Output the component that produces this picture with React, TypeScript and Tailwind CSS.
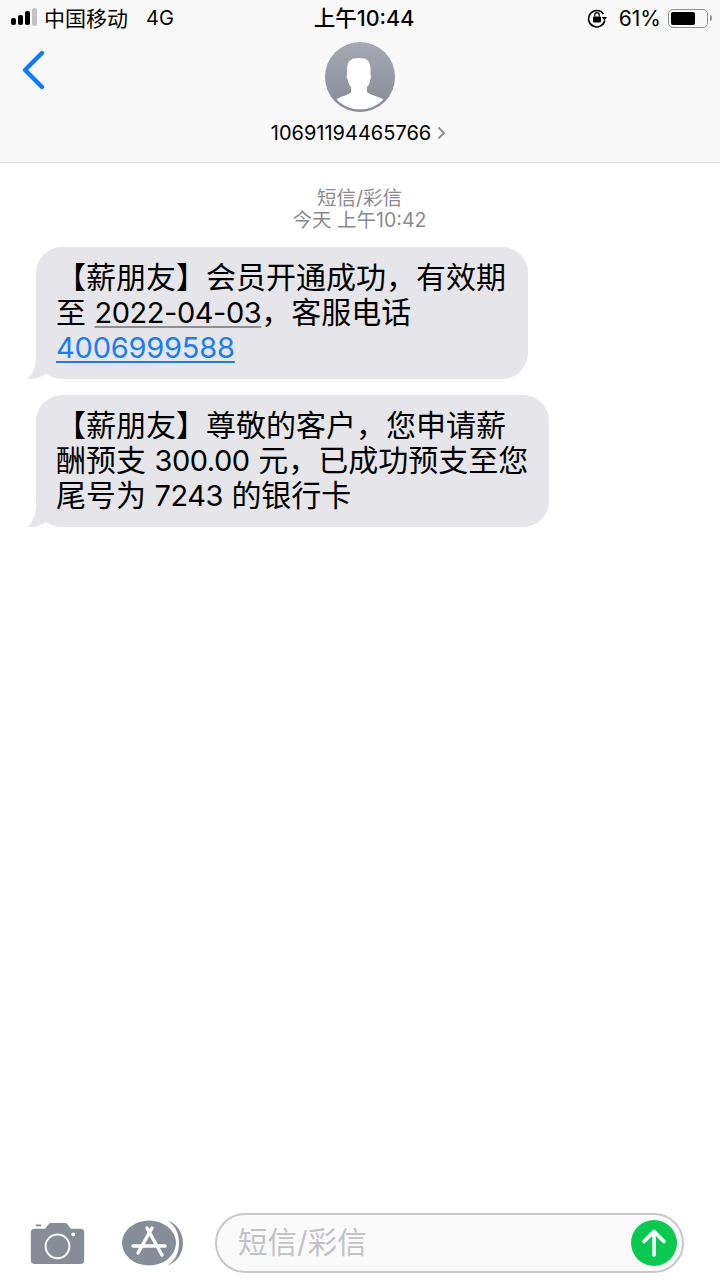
import React from 'react';

const num = 'text-[29px] tracking-[-0.45px]';

const BubbleTail = () => (
  <svg className="absolute left-[-10px] bottom-0" width="34" height="24" viewBox="0 0 34 24">
    <path d="M10 2 C10 11 7 19 2 23 C1 23.8 1.5 24 3 24 C10 24 16 22 21 18 L21 2 Z" fill="#e5e5ea" />
  </svg>
);

const Avatar = () => (
  <svg width="70" height="70" viewBox="0 0 70 70">
    <defs>
      <linearGradient id="av" x1="0" y1="0" x2="0" y2="1">
        <stop offset="0" stopColor="#a5a9b3" />
        <stop offset="1" stopColor="#858a95" />
      </linearGradient>
      <clipPath id="avc">
        <circle cx="35" cy="34.5" r="33" />
      </clipPath>
    </defs>
    <circle cx="35" cy="35" r="35" fill="url(#av)" />
    <path
      clipPath="url(#avc)"
      d="M34 16 C26 16 22 19 22 27 L22 33 C21 34 22 37 23 38 C23 41 25 44 26 45 L26 50 C24 53 17 54 12 57 L8 70 L62 70 L58 57 C52 54 45 53 42 50 L42 45 C44 43 45 41 45 38 C46.5 36 46.5 34 45.5 33 L45.5 27 C45.5 19 42 16 34 16 Z"
      fill="#ffffff"
    />
  </svg>
);

const Camera = () => (
  <svg width="55" height="41" viewBox="0 0 56 43">
    <path
      fillRule="evenodd"
      fill="#858d98"
      d="M4 6 H15 L18 2 Q19 0 21 0 H36 Q38 0 39 2 L42 6 H52 Q56 6 56 10 V39 Q56 43 52 43 H4 Q0 43 0 39 V10 Q0 6 4 6 Z M28 11 A13.5 13.5 0 1 0 28 38 A13.5 13.5 0 1 0 28 11 Z M28 13 A11.5 11.5 0 1 1 28 36 A11.5 11.5 0 1 1 28 13 Z"
    />
    <rect x="5" y="1.5" width="6" height="2" rx="1" fill="#858d98" />
    <circle cx="44.5" cy="12" r="2" fill="#ffffff" />
  </svg>
);

const AppStore = () => (
  <svg width="62" height="46" viewBox="0 0 62 46">
    <path d="M46 1 C54 6 57 14 57 23 C57 32 54 40 46 45 C54 43 61 34 61 23 C61 12 54 3 46 1 Z" fill="#858d98" />
    <ellipse cx="27" cy="23" rx="27" ry="22.5" fill="#858d98" />
    <g stroke="#ffffff" strokeWidth="3.4" strokeLinecap="round" fill="none">
      <path d="M30 8 L16 33" />
      <path d="M25 8 L40 35" />
      <path d="M11 26 H43" />
    </g>
  </svg>
);

const RotationLock = () => (
  <svg width="20" height="20" viewBox="0 0 20 20">
    <path d="M16.5 6 A8.2 8.2 0 1 0 17.8 12.5" fill="none" stroke="#000" strokeWidth="1.6" />
    <path d="M14.8 9 L20 9 L17.4 12.6 Z" fill="#000" />
    <rect x="6" y="8.5" width="8" height="6" rx="1" fill="#000" />
    <path d="M7.8 8.5 V6.8 A2.2 2.2 0 0 1 12.2 6.8 V8.5" fill="none" stroke="#000" strokeWidth="1.2" />
  </svg>
);

const Battery = () => (
  <div className="flex items-center">
    <div className="w-[40px] h-[19px] rounded-[5px] border border-[#8e8e8e] p-[2px]">
      <div className="w-[24px] h-full rounded-[2px] bg-black" />
    </div>
    <div className="w-[2px] h-[6px] ml-[2px] rounded-r-sm bg-[#9a9a9a]" />
  </div>
);

const App: React.FC = () => {
  return (
    <div
      className="flex flex-col h-[1280px] w-[720px] overflow-hidden bg-white text-black"
      style={{ fontFamily: 'Inter, "Noto Sans CJK SC", sans-serif' }}
    >
      {/* Header */}
      <div className="relative h-[163px] shrink-0 bg-[#f9f9f9] border-b border-[#dcdcdc]">
        <div className="flex items-center justify-between h-[36px] pl-[11px] pr-[8px]">
          <div className="flex items-center w-[240px]">
            <div className="flex items-center gap-[2px]">
              <div className="w-[5px] h-[7px] rounded-[2px] bg-black mt-[6px]" />
              <div className="w-[5px] h-[10px] rounded-[2px] bg-black mt-[3px]" />
              <div className="w-[5px] h-[14px] rounded-[2px] bg-black mt-[-1px]" />
              <div className="w-[5px] h-[18px] rounded-[2px] bg-[#c4c4c4] mt-[-2px]" />
            </div>
            <span className="ml-[7px] text-[21px] leading-none">中国移动</span>
            <span className="ml-[18px] text-[20px] leading-none">4G</span>
          </div>
          <span className="ml-[5px] pt-[2px] text-[21.5px] leading-none font-medium">上午10:44</span>
          <div className="flex items-center justify-end w-[240px]">
            <RotationLock />
            <span className="ml-[12px] text-[21px] leading-none">61%</span>
            <div className="ml-[7px]">
              <Battery />
            </div>
          </div>
        </div>
        <svg className="absolute left-[21px] top-[50px]" width="24" height="40" viewBox="0 0 24 40">
          <path d="M21 3 L4 20 L21 37" fill="none" stroke="#0a7aff" strokeWidth="4.4" strokeLinecap="round" strokeLinejoin="round" />
        </svg>
        <div className="flex flex-col items-center mt-[6px]">
          <Avatar />
          <div className="flex items-center mt-[9px] mr-[3px] h-[24px]">
            <span className="text-[20px] leading-none">10691194465766</span>
            <svg className="ml-[6px]" width="9" height="14" viewBox="0 0 9 14">
              <path d="M1.5 1.5 L7 7 L1.5 12.5" fill="none" stroke="#8f8f94" strokeWidth="2" />
            </svg>
          </div>
        </div>
      </div>

      {/* Messages */}
      <div className="flex-1 px-[36px] pt-[22px]">
        <div className="pt-[2px] text-center text-[19.5px] leading-[22px] text-[#8a8a8e] ml-[-1px]">
          <div>短信/彩信</div>
          <div>今天 上午10:42</div>
        </div>
        <div className="relative mt-[16px] w-[492px] h-[132px] rounded-[26px] bg-[#e5e5ea] pl-[20px] pt-[13px] text-[30px] leading-[35px]">
          <BubbleTail />
          <div className="relative whitespace-nowrap">【薪朋友】会员开通成功，有效期</div>
          <div className="relative whitespace-nowrap">
            至 <span className={`${num} underline decoration-[#8e8e93] decoration-[1.5px] underline-offset-[3px]`}>2022-04-03</span>，客服电话
          </div>
          <div className="relative whitespace-nowrap text-[29px] tracking-[-0.2px] text-[#1a7fec] underline decoration-[1.5px] underline-offset-[3px]">4006999588</div>
        </div>
        <div className="relative mt-[16px] w-[513px] h-[132px] rounded-[26px] bg-[#e5e5ea] pl-[20px] pt-[13px] text-[30px] leading-[35px]">
          <BubbleTail />
          <div className="relative whitespace-nowrap">【薪朋友】尊敬的客户，您申请薪</div>
          <div className="relative whitespace-nowrap">
            酬预支 <span className={num}>300.00</span> 元，已成功预支至您
          </div>
          <div className="relative whitespace-nowrap">
            尾号为 <span className={num}>7243</span> 的银行卡
          </div>
        </div>
      </div>

      {/* Input bar */}
      <div className="flex items-center h-[60px] shrink-0 mb-[7px] pl-[30px] pr-[36px]">
        <Camera />
        <div className="ml-[37px] flex">
          <AppStore />
        </div>
        <div className="flex items-center justify-between flex-1 h-[60px] ml-[31px] pl-[21px] pr-[5px] rounded-full border-2 border-[#c8c8cc] bg-[#fafafa]">
          <span className="text-[29.5px] leading-none text-[#c2c2c6]">短信/彩信</span>
          <div className="flex items-center justify-center w-[46px] h-[46px] rounded-full bg-[#09c950]">
            <svg width="26" height="30" viewBox="0 0 26 30">
              <path d="M13 27 V4 M3 13.5 L13 3.5 L23 13.5" fill="none" stroke="#ffffff" strokeWidth="3.6" strokeLinecap="round" strokeLinejoin="round" />
            </svg>
          </div>
        </div>
      </div>
    </div>
  );
};

export default App;
